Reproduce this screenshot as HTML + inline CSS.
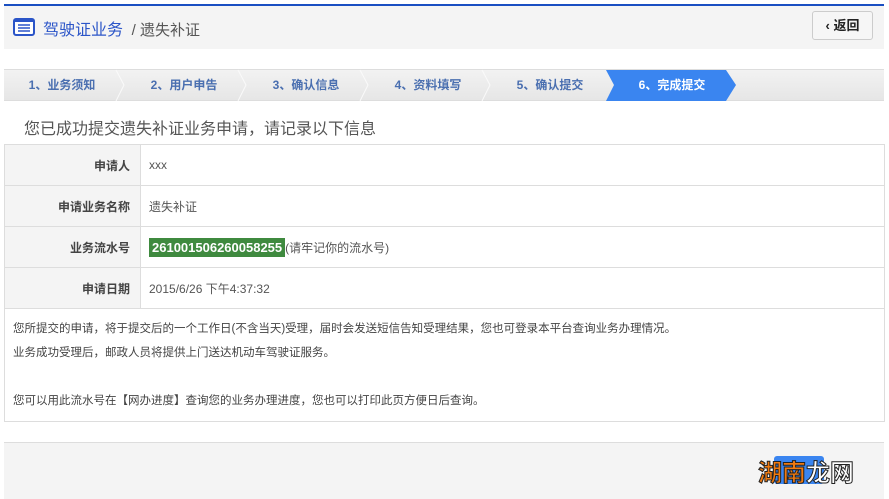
<!DOCTYPE html><html><head><meta charset="utf-8"><style>
body{margin:0;width:889px;height:498px;background:#fff;font-family:"Liberation Sans","Noto Sans CJK SC",sans-serif;position:relative;overflow:hidden}
.abs{position:absolute}
.step{position:absolute;top:70px;height:31px;line-height:31px;font-size:12px;font-weight:bold;color:#4a6fb0;text-align:center}
td{border:1px solid #ddd;font-size:12px;color:#555}
td.l{background:#f4f4f4;text-align:right;padding-right:10px;font-weight:bold;color:#444;width:124px}
td.v{padding-left:8px}
</style></head><body>
<div class="abs" style="left:4px;top:4px;width:880px;height:2px;background:#1a4fc2"></div>
<div class="abs" style="left:4px;top:6px;width:880px;height:43px;background:#f4f4f4"></div>
<svg class="abs" style="left:13px;top:18px" width="22" height="18"><rect x="1" y="1" width="20" height="16" rx="2" fill="#fff" stroke="#2b55c8" stroke-width="2"/><rect x="1" y="1" width="20" height="3" fill="#2b55c8"/><path d="M5 7h12M5 10h12M5 13h12" stroke="#2b55c8" stroke-width="1.5"/></svg>
<div class="abs" style="left:43px;top:16px;font-size:16px;color:#2b55c8">驾驶证业务 <span style="color:#555;font-size:15px">&nbsp;/ 遗失补证</span></div>
<div class="abs" style="left:812px;top:11px;width:61px;height:29px;border:1px solid #ccc;border-radius:3px;background:#f6f6f6;box-sizing:border-box;font-size:13px;font-weight:bold;line-height:27px;text-align:center;color:#222">‹ 返回</div>
<div class="abs" style="left:4px;top:69px;width:880px;height:32px;background:linear-gradient(#f2f2f2,#e6e6e6);border-top:1px solid #ddd;border-bottom:1px solid #ddd;box-sizing:border-box"></div>
<svg class="abs" style="left:0;top:69px" width="889" height="32"><path d="M116 1l8 15-8 16M238 1l8 15-8 16M360 1l8 15-8 16M482 1l8 15-8 16" stroke="#fafafa" stroke-width="1" fill="none"/><path d="M606 1H726L736 16L726 32H606L614 16Z" fill="#3a85f0"/></svg>
<div class="step" style="left:4px;width:116px">1、业务须知</div>
<div class="step" style="left:126px;width:116px">2、用户申告</div>
<div class="step" style="left:248px;width:116px">3、确认信息</div>
<div class="step" style="left:370px;width:116px">4、资料填写</div>
<div class="step" style="left:492px;width:116px">5、确认提交</div>
<div class="step" style="left:614px;width:116px;color:#fff">6、完成提交</div>
<div class="abs" style="left:24px;top:115px;font-size:16px;color:#555">您已成功提交遗失补证业务申请，请记录以下信息</div>
<table class="abs" style="left:4px;top:144px;width:881px;border-collapse:collapse">
<tr style="height:41px"><td class="l">申请人</td><td class="v">xxx</td></tr>
<tr style="height:41px"><td class="l">申请业务名称</td><td class="v">遗失补证</td></tr>
<tr style="height:41px"><td class="l">业务流水号</td><td class="v"><span style="background:#3f8a3f;color:#fff;font-weight:bold;font-size:13px;padding:2px 3px">261001506260058255</span>(请牢记你的流水号)</td></tr>
<tr style="height:41px"><td class="l">申请日期</td><td class="v">2015/6/26 下午4:37:32</td></tr>
<tr style="height:113px"><td colspan="2" style="padding:8px 8px;vertical-align:top;line-height:24px;font-size:11.5px;color:#444">您所提交的申请，将于提交后的一个工作日(不含当天)受理，届时会发送短信告知受理结果，您也可登录本平台查询业务办理情况。<br>业务成功受理后，邮政人员将提供上门送达机动车驾驶证服务。<br><br>您可以用此流水号在【网办进度】查询您的业务办理进度，您也可以打印此页方便日后查询。</td></tr>
</table>
<div class="abs" style="left:4px;top:442px;width:880px;height:56px;background:#f4f4f4;border-top:1px solid #ddd"></div>
<div class="abs" style="left:774px;top:456px;width:50px;height:28px;background:#3a85f0;border-radius:3px"></div>
<div class="abs" style="left:758px;top:453px;font-size:24px;font-weight:bold;-webkit-text-stroke:1px #222"><span style="color:#f07a10">湖南</span><span style="color:#fff">龙网</span></div>
</body></html>
